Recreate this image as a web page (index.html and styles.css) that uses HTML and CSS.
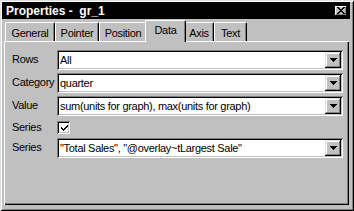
FILE: index.html
```html
<!DOCTYPE html>
<html>
<head>
<meta charset="utf-8">
<link rel="stylesheet" href="styles.css">
</head>
<body>
<div class="window">
  <div class="titlebar">
    <span class="title">Properties -&nbsp; gr_1</span>
    <span class="close"><svg width="8" height="7" viewBox="0 0 8 7" shape-rendering="crispEdges"><path d="M0 0h2v1h-2zM6 0h2v1h-2zM1 1h2v1h-2zM5 1h2v1h-2zM2 2h4v1h-4zM3 3h2v1h-2zM2 4h4v1h-4zM1 5h2v1h-2zM5 5h2v1h-2zM0 6h2v1h-2zM6 6h2v1h-2z" fill="#000"/></svg></span>
  </div>
  <div class="content">
    <div class="tabs">
      <div class="tab tab-general">General</div>
      <div class="tab tab-pointer">Pointer</div>
      <div class="tab tab-position">Position</div>
      <div class="tab tab-data active">Data</div>
      <div class="tab tab-axis">Axis</div>
      <div class="tab tab-text">Text</div>
    </div>
    <div class="panel">
      <div class="form">
        <span class="label">Rows</span>
        <div class="combo"><span class="value">All</span><span class="drop"><svg width="7" height="4" viewBox="0 0 7 4" shape-rendering="crispEdges"><path d="M0 0h7v1h-7zM1 1h5v1h-5zM2 2h3v1h-3zM3 3h1v1h-1z" fill="#000"/></svg></span></div>
        <span class="label">Category</span>
        <div class="combo"><span class="value">quarter</span><span class="drop"><svg width="7" height="4" viewBox="0 0 7 4" shape-rendering="crispEdges"><path d="M0 0h7v1h-7zM1 1h5v1h-5zM2 2h3v1h-3zM3 3h1v1h-1z" fill="#000"/></svg></span></div>
        <span class="label">Value</span>
        <div class="combo"><span class="value">sum(units for graph), max(units for graph)</span><span class="drop"><svg width="7" height="4" viewBox="0 0 7 4" shape-rendering="crispEdges"><path d="M0 0h7v1h-7zM1 1h5v1h-5zM2 2h3v1h-3zM3 3h1v1h-1z" fill="#000"/></svg></span></div>
        <span class="label label-check">Series</span>
        <div class="check-row"><span class="checkbox"><svg width="9" height="9" viewBox="0 0 9 9" shape-rendering="crispEdges"><path d="M6 1h1v1h-1zM5 2h2v1h-2zM0 3h1v1h-1zM4 3h2v1h-2zM0 4h2v1h-2zM3 4h2v1h-2zM1 5h3v1h-3zM2 6h1v1h-1z" fill="#000" transform="translate(1,0)"/></svg></span></div>
        <span class="label">Series</span>
        <div class="combo"><span class="value">"Total Sales", "@overlay~tLargest Sale"</span><span class="drop"><svg width="7" height="4" viewBox="0 0 7 4" shape-rendering="crispEdges"><path d="M0 0h7v1h-7zM1 1h5v1h-5zM2 2h3v1h-3zM3 3h1v1h-1z" fill="#000"/></svg></span></div>
      </div>
    </div>
  </div>
</div>
</body>
</html>
```

FILE: styles.css
```css
html, body {
  margin: 0;
  padding: 0;
  background: #c0c0c0;
}

body {
  font-family: "Liberation Sans", Arial, sans-serif;
  font-size: 11px;
  letter-spacing: -0.3px;
  color: #000;
}

.window {
  width: 354px;
  height: 211px;
  box-sizing: border-box;
  padding: 2px 4px 4px 2px;
  display: flex;
  flex-direction: column;
  background: #c0c0c0;
  box-shadow: inset 1px 1px #dfdfdf, inset -1px -1px #000, inset 2px 2px #fff, inset -2px -2px #808080;
}

.titlebar {
  height: 17px;
  background: #000;
  color: #fff;
  display: flex;
  align-items: center;
  justify-content: space-between;
  padding: 0 3px 0 4px;
  flex-shrink: 0;
}

.title {
  font-weight: bold;
  font-size: 12px;
  letter-spacing: 0;
  white-space: pre;
}

.close {
  width: 12px;
  height: 10px;
  box-sizing: border-box;
  background: #c0c0c0;
  box-shadow: inset -1px -1px #000, inset 1px 1px #fff, inset -2px -2px #808080;
  display: flex;
  align-items: center;
  justify-content: center;
  padding: 0 1px 1px 0;
  margin-top: 1px;
}

.close svg { display: block; }

.content {
  flex: 1;
  display: flex;
  flex-direction: column;
  padding: 0 1px 2px 2px;
}

.tabs {
  display: flex;
  align-items: flex-end;
  height: 22px;
  padding-left: 1px;
  flex-shrink: 0;
}

.tab {
  height: 19px;
  box-sizing: border-box;
  padding-top: 4px;
  text-align: center;
  border-top: 1px solid #fff;
  border-left: 1px solid #fff;
  border-right: 1px solid #000;
  border-radius: 2px 2px 0 0;
  box-shadow: inset -1px 0 #808080;
  background: #c0c0c0;
  white-space: nowrap;
}

.tab-general { width: 50px; }
.tab-pointer { width: 44px; }
.tab-position { width: 48px; }
.tab-data { width: 41px; }
.tab-axis { width: 30px; }
.tab-text { width: 33px; }

.tab.active {
  height: 22px;
  margin: 0 -2px -1px -2px;
  padding-top: 3px;
  position: relative;
  z-index: 1;
}

.panel {
  flex: 1;
  box-sizing: border-box;
  padding: 9px 6px 0 8px;
  box-shadow: inset 1px 1px #fff, inset -1px -1px #000, inset -2px -2px #808080;
}

.form {
  display: grid;
  grid-template-columns: 45px 1fr;
  row-gap: 3px;
}

.label {
  padding-top: 3px;
  white-space: nowrap;
}

.label-check {
  padding-top: 2px;
}

.combo {
  height: 20px;
  box-sizing: border-box;
  background: #fff;
  box-shadow: inset 1px 1px #808080, inset -1px -1px #fff, inset 2px 2px #000, inset -2px -2px #c0c0c0;
  display: flex;
  align-items: stretch;
  padding: 2px;
}

.value {
  flex: 1;
  padding: 2px 0 0 1px;
  white-space: nowrap;
  overflow: hidden;
}

.drop {
  width: 16px;
  box-sizing: border-box;
  background: #c0c0c0;
  box-shadow: inset -1px -1px #000, inset 1px 1px #dfdfdf, inset -2px -2px #808080, inset 2px 2px #fff;
  display: flex;
  align-items: center;
  justify-content: center;
  padding-bottom: 1px;
}

.drop svg { display: block; }

.check-row {
  height: 16px;
}

.checkbox {
  display: flex;
  align-items: center;
  justify-content: center;
  width: 13px;
  height: 13px;
  box-sizing: border-box;
  margin-top: 2px;
  background: #fff;
  box-shadow: inset 1px 1px #808080, inset -1px -1px #fff, inset 2px 2px #000, inset -2px -2px #c0c0c0;
  padding: 1px 0 0 1px;
}

.checkbox svg { display: block; }
```
